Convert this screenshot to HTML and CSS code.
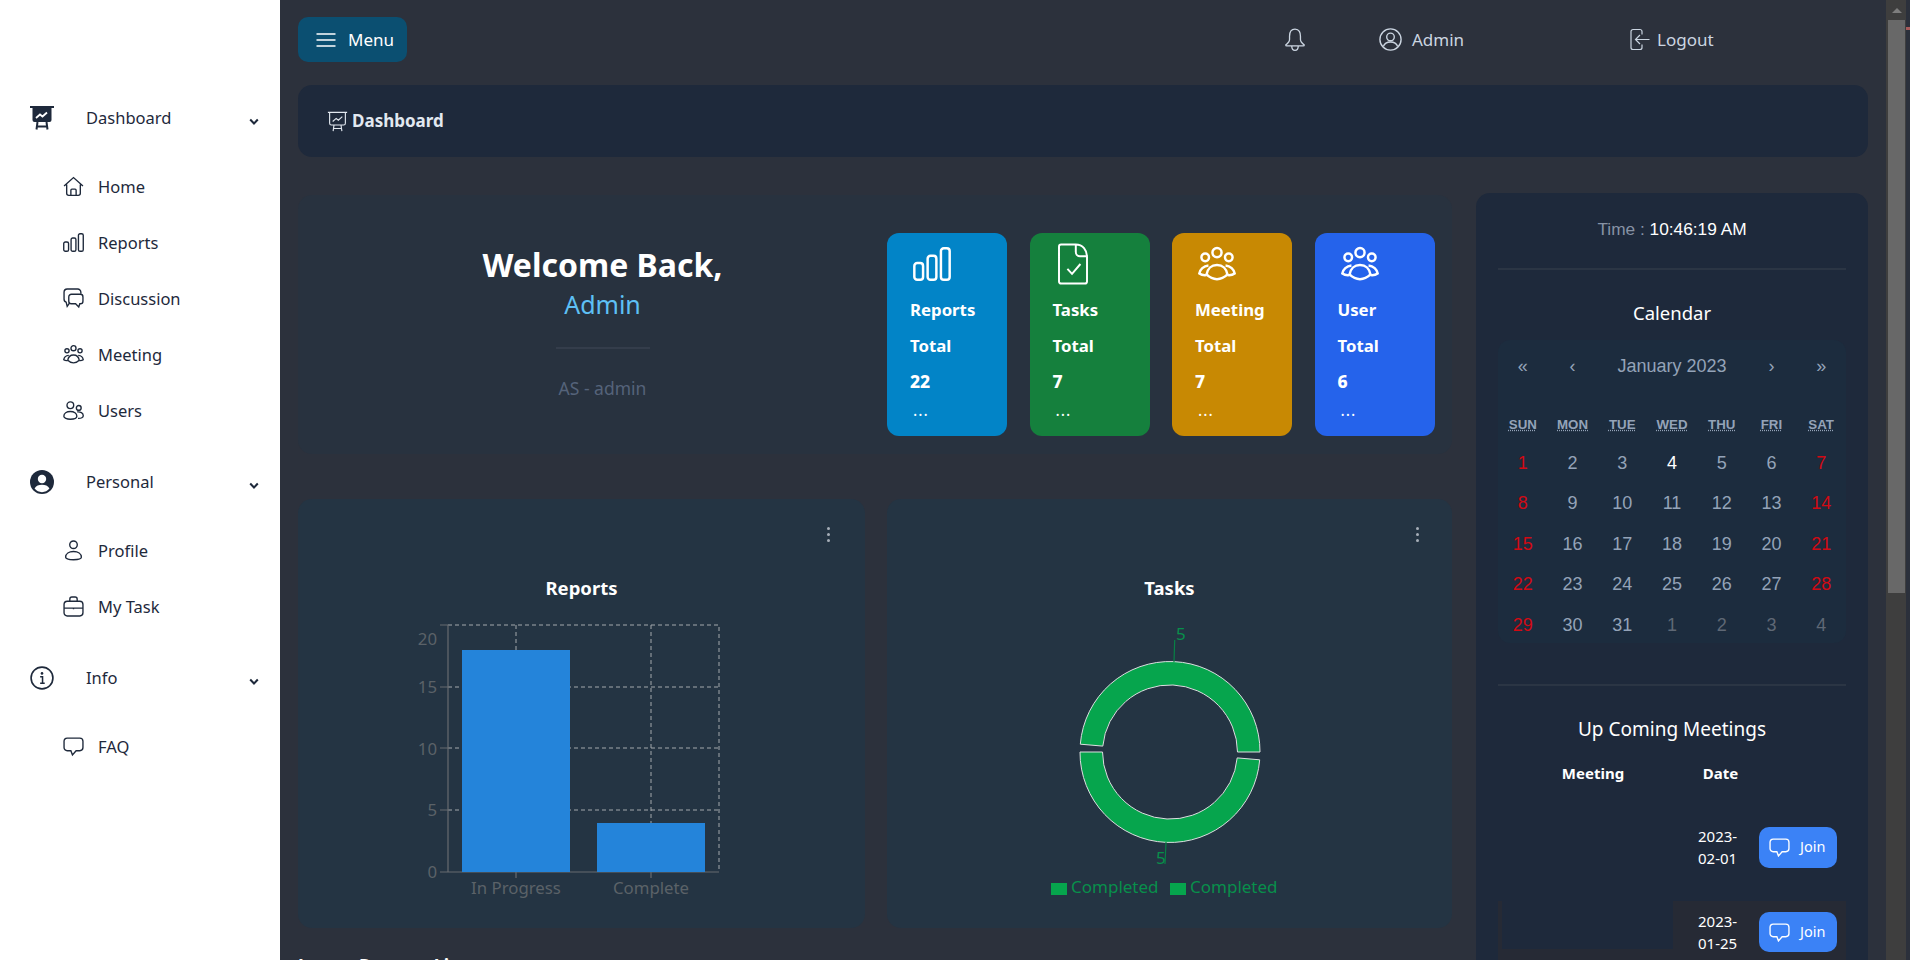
FILE: index.html
```html
<!DOCTYPE html>
<html lang="en">
<head>
<meta charset="utf-8">
<title>Dashboard</title>
<link rel="stylesheet" href="styles.css">
</head>
<body>
<svg class="sprite" xmlns="http://www.w3.org/2000/svg">
  <symbol id="i-board" viewBox="0 0 24 24"><path d="M0 1h24" fill="none" stroke="currentColor" stroke-width="2"/><path d="M2.5 2h19v12a2 2 0 0 1-2 2h-15a2 2 0 0 1-2-2z" fill="currentColor"/><path d="M6 12l4-3.5 2.5 2L17 6.500" fill="none" stroke="#fff" stroke-width="1.800"/><path d="M7.500 16l-1 7.500M16.500 16l1 7.500M6.500 20.500h11" fill="none" stroke="currentColor" stroke-width="2"/></symbol>
  <symbol id="i-board-o" viewBox="0 0 24 24"><g fill="none" stroke="currentColor" stroke-width="1.300"><path d="M1 1.500h22M3 1.500v12.500a2 2 0 0 0 2 2h14a2 2 0 0 0 2-2V1.500M8 16l-1 7M16 16l1 7M7 20h10"/><path d="M6.500 12l4-3.500 2.500 2 4.500-4"/></g></symbol>
  <symbol id="i-home" viewBox="0 0 20 20"><path d="M1 9.500 10 1.500l9 8M3.500 8v8.500a2 2 0 0 0 2 2h9a2 2 0 0 0 2-2V8M7.500 18.500v-5a1 1 0 0 1 1-1h3a1 1 0 0 1 1 1v5" fill="none" stroke="currentColor" stroke-width="1.300"/></symbol>
  <symbol id="i-bars" viewBox="0 0 20 18"><g fill="none" stroke="currentColor" stroke-width="1.300"><rect x=".7" y="8.500" width="4.600" height="8.800" rx="1.500"/><rect x="7.700" y="4.700" width="4.600" height="12.600" rx="1.500"/><rect x="14.700" y=".7" width="4.600" height="16.600" rx="1.500"/></g></symbol>
  <symbol id="i-chats" viewBox="0 0 20 20"><g fill="none" stroke="currentColor" stroke-width="1.300"><path d="M17 5.500V4a3 3 0 0 0-3-3H4a3 3 0 0 0-3 3v6.500a3 3 0 0 0 2 3l1 4 2.500-3.500"/><path d="M8 6h8.500a2.500 2.500 0 0 1 2.500 2.500v4a2.500 2.500 0 0 1-2.500 2.500h-.5l-1 3-3-3H8a2.500 2.500 0 0 1-2.500-2.500v-4A2.500 2.500 0 0 1 8 6z"/></g></symbol>
  <symbol id="i-people" viewBox="0 0 20 18"><g fill="none" stroke="currentColor" stroke-width="1.300"><circle cx="10" cy="3" r="2.400"/><circle cx="3.800" cy="5.500" r="2"/><circle cx="16.200" cy="5.500" r="2"/><path d="M4.500 14.500C5 11.500 7 9.500 10 9.500s5 2 5.500 5C14 16 12 17 10 17s-4-1-5.500-2.500z"/><path d="M5.500 9.800C3 10 1 11.800.7 14c1 .7 2.300 1 3.800.8M14.500 9.800c2.500.2 4.500 2 4.800 4.200-1 .7-2.300 1-3.800.8"/></g></symbol>
  <symbol id="i-users" viewBox="0 0 20 18"><g fill="none" stroke="currentColor" stroke-width="1.300"><circle cx="7" cy="4" r="3.200"/><circle cx="15" cy="6.500" r="2.300"/><path d="M.8 14.500c0-2.800 2.700-4.500 6.200-4.500s6.200 1.700 6.200 4.500c0 1.700-2.800 2.800-6.200 2.800S.8 16.200.8 14.500z"/><path d="M13.500 10.300c3-.3 5.800 1 5.800 3.700 0 1.600-1.800 2.600-5 2.500"/></g></symbol>
  <symbol id="i-user-fill" viewBox="0 0 20 20"><circle cx="10" cy="10" r="10" fill="currentColor"/><circle cx="10" cy="7.500" r="3.500" fill="#fff"/><path d="M3.800 15.500C5 13 7.300 12.300 10 12.300s5 .7 6.200 3.200A8 8 0 0 1 10 18.500a8 8 0 0 1-6.200-3z" fill="#fff"/></symbol>
  <symbol id="i-user-o" viewBox="0 0 20 20"><g fill="none" stroke="currentColor" stroke-width="1.200"><circle cx="10" cy="10" r="9.200"/><circle cx="10" cy="7.800" r="3.300"/><path d="M3.800 16c1-2.800 3.300-3.800 6.200-3.800s5.200 1 6.200 3.800"/></g></symbol>
  <symbol id="i-person" viewBox="0 0 20 20"><g fill="none" stroke="currentColor" stroke-width="1.300"><circle cx="10" cy="4.500" r="3.600"/><path d="M2.500 16.500c0-3.500 3.200-5.500 7.500-5.500s7.500 2 7.500 5.500c0 1.300-3.400 2.300-7.500 2.300s-7.500-1-7.500-2.300z"/></g></symbol>
  <symbol id="i-case" viewBox="0 0 20 20"><g fill="none" stroke="currentColor" stroke-width="1.300"><rect x="1" y="5" width="18" height="14" rx="3"/><path d="M6.500 5V3a2 2 0 0 1 2-2h3a2 2 0 0 1 2 2v2M1 11.500h18M10 11v1.500"/></g></symbol>
  <symbol id="i-info" viewBox="0 0 22 22"><circle cx="11" cy="11" r="10" fill="none" stroke="currentColor" stroke-width="1.500"/><circle cx="11" cy="6.800" r="1.200" fill="currentColor"/><path d="M9.300 9.800H11.500V15.800M9.300 15.800h4.200" fill="none" stroke="currentColor" stroke-width="1.400"/></symbol>
  <symbol id="i-chat" viewBox="0 0 20 18"><path d="M4 1h12a3 3 0 0 1 3 3v6a3 3 0 0 1-3 3h-3.500L9 17l-1.500-4H4a3 3 0 0 1-3-3V4a3 3 0 0 1 3-3z" fill="none" stroke="currentColor" stroke-width="1.300"/></symbol>
  <symbol id="i-bell" viewBox="0 0 20 22"><path d="M10 1C6 1 5 4.500 5 7.500v3c0 2-1.500 3.500-3.500 5 0 .5.300.8 1 .8h15c.7 0 1-.3 1-.8-2-1.500-3.500-3-3.500-5v-3C15 4.500 14 1 10 1zM7 16.300c0 2.700 1.500 4.200 3 4.200s3-1.500 3-4.200" fill="none" stroke="currentColor" stroke-width="1.200"/></symbol>
  <symbol id="i-logout" viewBox="0 0 20 22"><path d="M12 6V3a2 2 0 0 0-2-2H3a2 2 0 0 0-2 2v16a2 2 0 0 0 2 2h7a2 2 0 0 0 2-2v-3M19.500 11H6M10 6.500 5.500 11l4.500 4.500" fill="none" stroke="currentColor" stroke-width="1.200"/></symbol>
  <symbol id="i-file" viewBox="0 0 22 30"><g fill="none" stroke="currentColor" stroke-width="1.400"><path d="M3 1h10c5 0 8 4 8 9v17.500a1.500 1.500 0 0 1-1.500 1.500h-17A1.500 1.500 0 0 1 1 27.500v-25A1.500 1.500 0 0 1 2.500 1zM13 1v5.500a3 3 0 0 0 3 3h5"/><path d="M7 18.500l3.300 3.500 6-7"/></g></symbol>
  <symbol id="i-chev" viewBox="0 0 10 8"><path d="M1.200 1.500 5 5.500l3.800-4" fill="none" stroke="currentColor" stroke-width="2"/></symbol>
  <symbol id="i-menu" viewBox="0 0 20 16"><path d="M.5 2h19M.5 8h19M.5 14h19" fill="none" stroke="currentColor" stroke-width="1.500"/></symbol>
</svg>

<div class="app">
  <nav class="sidebar">
    <section class="group">
      <div class="group-head"><svg class="icon-lg"><use href="#i-board"/></svg><span class="group-name">Dashboard</span><svg class="chev"><use href="#i-chev"/></svg></div>
      <ul class="sub">
        <li><svg class="icon"><use href="#i-home"/></svg>Home</li>
        <li><svg class="icon"><use href="#i-bars"/></svg>Reports</li>
        <li><svg class="icon"><use href="#i-chats"/></svg>Discussion</li>
        <li><svg class="icon"><use href="#i-people"/></svg>Meeting</li>
        <li><svg class="icon"><use href="#i-users"/></svg>Users</li>
      </ul>
    </section>
    <section class="group">
      <div class="group-head"><svg class="icon-lg"><use href="#i-user-fill"/></svg><span class="group-name">Personal</span><svg class="chev"><use href="#i-chev"/></svg></div>
      <ul class="sub">
        <li><svg class="icon"><use href="#i-person"/></svg>Profile</li>
        <li><svg class="icon"><use href="#i-case"/></svg>My Task</li>
      </ul>
    </section>
    <section class="group">
      <div class="group-head"><svg class="icon-lg"><use href="#i-info"/></svg><span class="group-name">Info</span><svg class="chev"><use href="#i-chev"/></svg></div>
      <ul class="sub">
        <li><svg class="icon"><use href="#i-chat"/></svg>FAQ</li>
      </ul>
    </section>
  </nav>

  <main class="main">
    <header class="topbar">
      <button class="menu-btn"><svg class="menu-icon"><use href="#i-menu"/></svg>Menu</button>
      <svg class="bell"><use href="#i-bell"/></svg>
      <span class="top-link admin"><svg class="top-icon"><use href="#i-user-o"/></svg>Admin</span>
      <span class="top-link logout"><svg class="top-icon logout-icon"><use href="#i-logout"/></svg>Logout</span>
    </header>

    <div class="titlebar"><svg class="title-icon"><use href="#i-board-o"/></svg><span class="title-text">Dashboard</span></div>

    <div class="content">
      <div class="left">
        <section class="welcome">
          <div class="greet">
            <h1>Welcome Back,</h1>
            <p class="greet-name">Admin</p>
            <hr class="greet-rule">
            <p class="greet-role">AS - admin</p>
          </div>
          <div class="tiles">
            <article class="tile tile-blue"><svg class="tile-icon"><use href="#i-bars"/></svg><div class="tile-row">Reports</div><div class="tile-row">Total</div><div class="tile-row tile-value">22</div><div class="tile-dots">...</div></article>
            <article class="tile tile-green"><svg class="tile-icon file"><use href="#i-file"/></svg><div class="tile-row">Tasks</div><div class="tile-row">Total</div><div class="tile-row tile-value">7</div><div class="tile-dots">...</div></article>
            <article class="tile tile-amber"><svg class="tile-icon"><use href="#i-people"/></svg><div class="tile-row">Meeting</div><div class="tile-row">Total</div><div class="tile-row tile-value">7</div><div class="tile-dots">...</div></article>
            <article class="tile tile-royal"><svg class="tile-icon"><use href="#i-people"/></svg><div class="tile-row">User</div><div class="tile-row">Total</div><div class="tile-row tile-value">6</div><div class="tile-dots">...</div></article>
          </div>
        </section>

        <div class="charts">
          <section class="chart-card">
            <span class="kebab"><i></i><i></i><i></i></span>
            <h2 class="chart-title">Reports</h2>
            <svg class="chart" viewBox="0 0 567 318">
              <g class="grid">
                <path d="M150 15H421V262M150 77H421M150 138H421M150 200H421M218 15V262M353 15V262"/>
              </g>
              <path class="axis" d="M150 15V262H421M142 15H150M142 77H150M142 138H150M142 200H150M142 262H150M218 262V268M353 262V268"/>
              <rect class="bar" x="164" y="40" width="108" height="222"/>
              <rect class="bar" x="299" y="213" width="108" height="49"/>
              <text class="tick" x="139" y="35" text-anchor="end">20</text>
              <text class="tick" x="139" y="83" text-anchor="end">15</text>
              <text class="tick" x="139" y="145" text-anchor="end">10</text>
              <text class="tick" x="139" y="206" text-anchor="end">5</text>
              <text class="tick" x="139" y="268" text-anchor="end">0</text>
              <text class="tick" x="218" y="284" text-anchor="middle">In Progress</text>
              <text class="tick" x="353" y="284" text-anchor="middle">Complete</text>
            </svg>
          </section>
          <section class="chart-card">
            <span class="kebab"><i></i><i></i><i></i></span>
            <h2 class="chart-title">Tasks</h2>
            <svg class="chart" viewBox="0 0 565 318">
              <path class="slice" d="M373 142A90 90 0 0 0 193.300 134.200L215.800 136.100A67.500 67.500 0 0 1 350.500 142Z"/>
              <path class="slice" d="M372.700 149.800A90 90 0 0 1 193 142L215.500 142A67.500 67.500 0 0 0 350.200 147.900Z"/>
              <path class="leader" d="M287 52 287.700 30M279 232 278 254"/>
              <text class="pie-label" x="289" y="30">5</text>
              <text class="pie-label" x="269" y="254">5</text>
              <rect class="swatch" x="164" y="273" width="16" height="12"/>
              <text class="pie-label" x="184" y="283">Completed</text>
              <rect class="swatch" x="283" y="273" width="16" height="12"/>
              <text class="pie-label" x="303" y="283">Completed</text>
            </svg>
          </section>
        </div>

        <h2 class="list-title">Latest Reports List</h2>
      </div>

      <aside class="panel">
        <p class="clock">Time : <span class="clock-value">10:46:19 AM</span></p>
        <hr class="panel-rule clock-rule">
        <h3 class="panel-title cal-title">Calendar</h3>
        <div class="calendar">
          <div class="cal-nav"><span>«</span><span>‹</span><span class="cal-month">January 2023</span><span>›</span><span>»</span></div>
          <div class="cal-week"><abbr>SUN</abbr><abbr>MON</abbr><abbr>TUE</abbr><abbr>WED</abbr><abbr>THU</abbr><abbr>FRI</abbr><abbr>SAT</abbr></div>
          <div class="cal-days">
            <span class="we">1</span><span>2</span><span>3</span><span class="today">4</span><span>5</span><span>6</span><span class="we">7</span>
            <span class="we">8</span><span>9</span><span>10</span><span>11</span><span>12</span><span>13</span><span class="we">14</span>
            <span class="we">15</span><span>16</span><span>17</span><span>18</span><span>19</span><span>20</span><span class="we">21</span>
            <span class="we">22</span><span>23</span><span>24</span><span>25</span><span>26</span><span>27</span><span class="we">28</span>
            <span class="we">29</span><span>30</span><span>31</span><span class="off">1</span><span class="off">2</span><span class="off">3</span><span class="off">4</span>
          </div>
        </div>
        <hr class="panel-rule meet-rule">
        <h3 class="panel-title meet-title">Up Coming Meetings</h3>
        <div class="meet-head"><span>Meeting</span><span>Date</span></div>
        <div class="meet-row"><div class="meet-name"></div><div class="meet-date">2023-<br>02-01</div><button class="join"><svg class="join-icon"><use href="#i-chat"/></svg><span class="join-text">Join</span></button></div>
        <div class="meet-row meet-row-alt"><div class="meet-name"></div><div class="meet-date">2023-<br>01-25</div><button class="join"><svg class="join-icon"><use href="#i-chat"/></svg><span class="join-text">Join</span></button></div>
      </aside>
    </div>
  </main>

  <div class="scrollbar">
    <div class="track">
      <div class="arrow"></div>
      <div class="thumb"></div>
    </div>
    <div class="edge"><div class="edge-mark"></div></div>
  </div>
</div>
</body>
</html>
```

FILE: styles.css
```css
* { box-sizing: border-box; }
html, body { margin: 0; height: 960px; overflow: hidden; }
body { font-family: "Noto Sans", "Open Sans", sans-serif; background: #2c313c; color: #e2e8f0; }
h1, h2, h3, p, ul { margin: 0; padding: 0; }
ul { list-style: none; }
button { font: inherit; border: 0; }
.sprite { display: none; }

.app { display: flex; height: 960px; }

/* sidebar */
.sidebar { width: 280px; flex: none; background: #fff; color: #1e293b; padding-top: 97px; font-size: 16.500px; }
.group { margin-bottom: 22.500px; }
.group-head { display: flex; align-items: center; height: 40px; padding-left: 30px; }
.icon-lg { width: 24px; height: 24px; flex: none; margin-top: 1px; }
.group-name { margin-left: 32px; }
.chev { width: 10px; height: 8px; margin-left: auto; margin-right: 21px; margin-top: 10px; }
.sub { margin-top: 21.500px; padding-left: 63px; }
.sub li { display: flex; align-items: center; height: 56px; }
.icon { width: 21px; height: 21px; margin-right: 14px; flex: none; }

/* main */
.main { flex: 1; min-width: 0; padding: 0 18px; }
.topbar { display: flex; align-items: flex-start; height: 85px; padding-top: 17px; }
.menu-btn { display: flex; align-items: center; width: 109px; height: 45px; padding-left: 18px; background: #0b4f71; color: #fff; border-radius: 10px; font-size: 17px; }
.menu-icon { width: 20px; height: 16px; margin-right: 12px; }
.bell { width: 22px; height: 24px; margin-left: 877px; margin-top: 11px; color: #cbd5e1; }
.top-link { display: flex; align-items: center; height: 44px; font-size: 17px; color: #cbd5e1; }
.admin { margin-left: 73px; }
.logout { margin-left: 166px; }
.top-icon { width: 23px; height: 23px; margin-right: 10px; }
.logout-icon { width: 20px; margin-right: 7px; }

.titlebar { display: flex; align-items: center; height: 72px; padding-left: 29px; background: #1e293b; border-radius: 14px; font-weight: 700; font-size: 17px; color: #e2e8f0; }
.title-icon { width: 21px; height: 21px; margin-right: 4px; }
.title-text { margin-top: -2px; }

.content { display: flex; gap: 24px; margin-top: 36px; align-items: flex-start; }
.left { width: 1154px; flex: none; padding-top: 2px; }

.welcome { display: flex; height: 259px; padding-top: 38px; background: #28323f; border-radius: 14px; }
.greet { width: 589px; flex: none; text-align: center; padding-left: 20px; }
.greet h1 { font-size: 32px; font-weight: 700; line-height: 44px; margin-top: 10px; color: #fff; }
.greet-name { font-size: 25px; line-height: 34px; color: #5ec0f5; }
.greet-rule { width: 94px; height: 2px; margin: 26px auto 0; border: 0; background: #343d4b; }
.greet-role { font-size: 17.500px; line-height: 24px; color: #55637a; margin-top: 27px; }

.tiles { display: flex; gap: 22.500px; }
.tile { width: 120px; height: 203px; padding: 12px 0 0 23px; border-radius: 12px; color: #fff; font-weight: 700; font-size: 16.800px; }
.tile-blue { background: #0284c7; }
.tile-green { background: #15803d; }
.tile-amber { background: #c88903; }
.tile-royal { background: #2563eb; }
.tile-icon { display: block; width: 38px; height: 38px; margin-left: 3px; margin-bottom: 9px; }
.tile-icon.file { width: 34px; height: 42px; margin-left: 3px; margin-top: -2px; margin-bottom: 7px; }
.tile-row { height: 36px; line-height: 35px; }
.tile-value { font-weight: 800; font-size: 17.500px; }
.tile-dots { line-height: 16px; font-weight: 400; font-size: 16px; letter-spacing: 1px; margin-left: 3px; margin-top: 2px; }

.charts { display: grid; grid-template-columns: 567px 565px; gap: 22px; margin-top: 45px; }
.chart-card { position: relative; height: 429px; background: #243443; border-radius: 14px; }
.kebab { position: absolute; top: 28px; right: 35px; display: flex; flex-direction: column; gap: 3px; }
.chart-card + .chart-card .kebab { right: 33px; }
.kebab i { width: 3px; height: 3px; border-radius: 50%; background: #a6aeb8; }
.chart-title { padding-top: 75px; height: 111px; line-height: 28px; text-align: center; font-size: 18.500px; font-weight: 700; color: #fff; }
.chart { display: block; width: 100%; height: 318px; overflow: visible; }
.grid path { fill: none; stroke: #a3a8ad; stroke-dasharray: 4 3; }
.axis { fill: none; stroke: #676b70; stroke-width: 1.200; }
.bar { fill: #2484da; }
.tick { font-size: 16.800px; fill: #5b6268; }
.slice { fill: #06a54d; stroke: #dcdfe0; stroke-width: 1; }
.leader { fill: none; stroke: #088146; stroke-width: 1.200; }
.pie-label { font-size: 17px; fill: #088f4b; }
.swatch { fill: #06a54d; }
.list-title { margin-top: 24px; font-size: 18px; line-height: 26px; font-weight: 700; color: #fff; white-space: nowrap; }

/* right panel */
.panel { width: 392px; flex: none; height: 900px; padding: 24px 22px 0; background: #1e293b; border-radius: 14px; }
.clock { font-family: "Liberation Sans", Arial, sans-serif; font-size: 17.300px; line-height: 24px; text-align: center; color: #8792a5; }
.clock-value { color: #fff; }
.panel-rule { height: 2px; border: 0; margin: 0; background: #2b3544; }
.clock-rule { margin-top: 27px; }
.panel-title { font-weight: 400; text-align: center; color: #fff; font-size: 18.500px; line-height: 24px; }
.cal-title { margin-top: 31px; }

.calendar { height: 303px; margin-top: 15px; background: #1c2c3e; border-radius: 12px; font-family: "Liberation Sans", Arial, sans-serif; font-size: 18px; color: #94a3b8; }
.cal-nav { display: grid; grid-template-columns: repeat(7, 1fr); height: 52px; align-items: center; text-align: center; }
.cal-month { grid-column: span 3; }
.cal-week { display: grid; grid-template-columns: repeat(7, 1fr); height: 28px; margin-top: 18px; align-items: center; text-align: center; }
.cal-week abbr { font-size: 13.300px; font-weight: 700; text-decoration: underline dotted; justify-self: center; }
.cal-days { display: grid; grid-template-columns: repeat(7, 1fr); grid-auto-rows: 40.500px; margin-top: 5px; align-items: center; text-align: center; }
.we { color: #d10a14; }
.today { color: #fff; }
.off { color: #5f6875; }

.meet-rule { margin-top: 41px; }
.meet-title { margin-top: 29px; line-height: 28px; font-size: 19px; }
.meet-head { display: flex; margin-top: 19px; height: 22px; line-height: 22px; font-size: 15px; font-weight: 700; color: #fff; }
.meet-head span:first-child { width: 190px; text-align: center; }
.meet-head span:last-child { width: 65px; text-align: center; }
.meet-row { display: flex; align-items: center; height: 66px; margin-top: 30px; font-size: 15px; line-height: 22px; color: #fff; }
.meet-row-alt { margin-top: 21px; background: #262a35; align-items: flex-start; padding-left: 4px; }
.meet-name { width: 175px; flex: none; height: 48px; }
.meet-row-alt .meet-name { width: 171px; background: #1e293b; }
.meet-date { width: 86px; flex: none; padding-left: 25px; }
.meet-row-alt .meet-date { padding-top: 9px; }
.join { display: flex; align-items: center; width: 78px; height: 41px; padding-left: 10px; background: #3b82f6; color: #fff; border-radius: 10px; font-size: 14.500px; }
.meet-row-alt .join { height: 40px; margin-top: 11px; }
.join-icon { width: 21px; height: 19px; margin-right: 10px; }
.join-text { margin-top: -2px; }

/* scrollbar */
.scrollbar { display: flex; width: 24px; flex: none; }
.track { width: 20px; background: #3e3e3e; padding: 0 1px 0 2px; }
.arrow { height: 20px; position: relative; }
.arrow::before { content: ""; position: absolute; left: 3.500px; top: 8px; border-left: 5px solid transparent; border-right: 5px solid transparent; border-bottom: 5px solid #7d7d7d; }
.thumb { height: 573px; background: #686868; }
.edge { width: 4px; background: #2b303b; padding-top: 27px; }
.edge-mark { height: 3px; background: #a85b5b; }
```
